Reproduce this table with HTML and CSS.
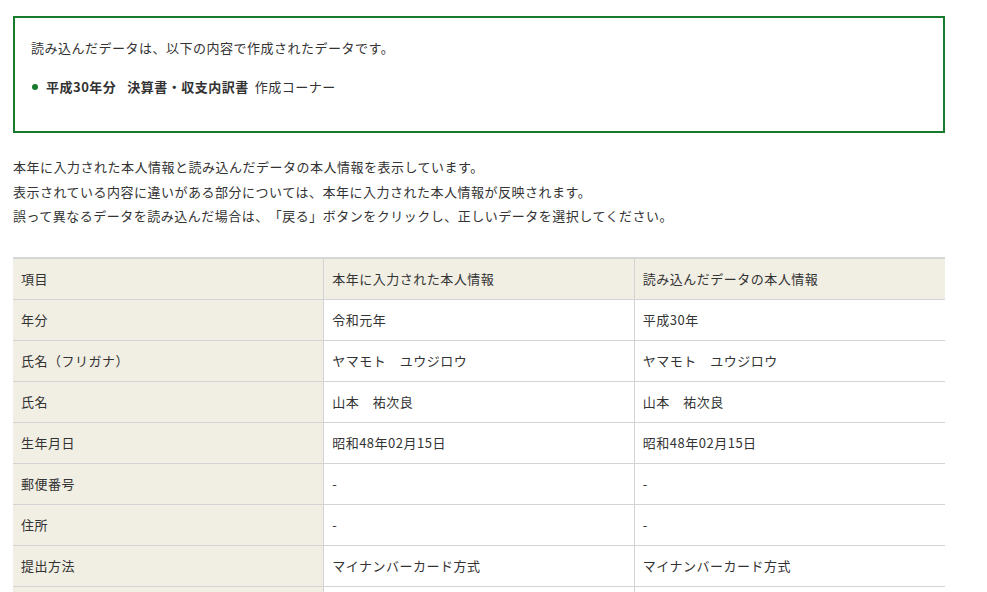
FILE: index.html
```html
<!DOCTYPE html>
<html lang="ja">
<head>
<meta charset="utf-8">
<title>本人情報の確認</title>
<link rel="stylesheet" href="styles.css">
</head>
<body>
<div class="page">
  <div class="notice">
    <p class="notice-lead">読み込んだデータは、以下の内容で作成されたデータです。</p>
    <ul class="notice-list">
      <li><strong>平成30年分&nbsp;&nbsp;決算書・収支内訳書</strong> 作成コーナー</li>
    </ul>
  </div>

  <div class="intro">
    <p>本年に入力された本人情報と読み込んだデータの本人情報を表示しています。</p>
    <p>表示されている内容に違いがある部分については、本年に入力された本人情報が反映されます。</p>
    <p>誤って異なるデータを読み込んだ場合は、「戻る」ボタンをクリックし、正しいデータを選択してください。</p>
  </div>

  <table class="info">
    <colgroup><col class="c1"><col class="c2"><col class="c3"></colgroup>
    <thead>
      <tr><th>項目</th><th>本年に入力された本人情報</th><th>読み込んだデータの本人情報</th></tr>
    </thead>
    <tbody>
      <tr><th>年分</th><td>令和元年</td><td>平成30年</td></tr>
      <tr><th>氏名（フリガナ）</th><td>ヤマモト　ユウジロウ</td><td>ヤマモト　ユウジロウ</td></tr>
      <tr><th>氏名</th><td>山本　祐次良</td><td>山本　祐次良</td></tr>
      <tr><th>生年月日</th><td>昭和48年02月15日</td><td>昭和48年02月15日</td></tr>
      <tr><th>郵便番号</th><td>-</td><td>-</td></tr>
      <tr><th>住所</th><td>-</td><td>-</td></tr>
      <tr><th>提出方法</th><td>マイナンバーカード方式</td><td>マイナンバーカード方式</td></tr>
      <tr><th>&nbsp;</th><td>&nbsp;</td><td>&nbsp;</td></tr>
    </tbody>
  </table>
</div>
</body>
</html>
```
FILE: styles.css
```css
html, body {
  margin: 0;
  padding: 0;
  background: #fff;
}
body {
  font-family: "Noto Sans CJK JP", "Noto Sans", sans-serif;
  font-size: 13px;
  letter-spacing: 0.5px;
  color: #333;
  text-spacing-trim: space-all;
}
.page {
  width: 932px;
  padding: 16px 0 0 13px;
}
.notice {
  border: 2px solid #177a2c;
  padding: 20px 16px 34px 16px;
}
.notice p,
.intro p {
  margin: 0;
}
.notice-lead {
  line-height: 20px;
}
.notice-list {
  list-style: none;
  margin: 19px 0 0 0;
  padding: 0;
  line-height: 20px;
}
.notice-list li {
  display: flex;
  align-items: center;
}
.notice-list li::before {
  content: "";
  width: 6px;
  height: 6px;
  border-radius: 50%;
  background: #177a2c;
  margin: 0 8px 0 1px;
  flex: none;
}
.notice-list strong {
  font-weight: bold;
  margin-right: 6px;
  white-space: pre;
  word-spacing: 2px;
}
.intro {
  margin-top: 22px;
  line-height: 24.5px;
}
.info {
  margin-top: 28px;
  width: 932px;
  border-collapse: collapse;
  table-layout: fixed;
  border-top: 2px solid #d6d6d6;
}
.info col.c1, .info col.c2, .info col.c3 {
  width: 33.333%;
}
.info th, .info td {
  height: 40px;
  padding: 0 8px;
  text-align: left;
  font-weight: normal;
  border-bottom: 1px solid #d3d3d3;
  border-left: 1px solid #d3d3d3;
  vertical-align: middle;
  line-height: 18px;
}
.info th:first-child {
  border-left: none;
}
.info thead th {
  background: #f1eee3;
}
.info tbody th {
  background: #f1eee3;
}
.info td {
  background: #fff;
}
```
